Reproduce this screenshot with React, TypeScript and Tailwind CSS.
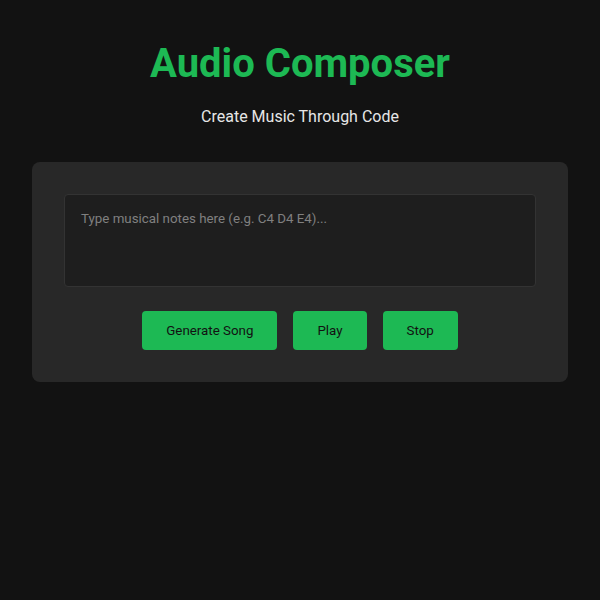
import { useState } from "react";

// Small music sketchpad: type notes, generate, play, stop.

const BUTTON =
  "h-[39px] rounded-[4px] bg-[#1db954] px-6 text-[13.33px] text-[#121212] hover:bg-[#1ed760] transition-colors";

export default function App() {
  const [notes, setNotes] = useState("");

  return (
    <div
      className="min-h-[600px] bg-[#121212] px-8 pt-[41px] pb-8"
      style={{ fontFamily: "Roboto, 'Noto Sans', sans-serif" }}
    >
      {/* ── Header ───────────────────────────────────────────── */}
      <h1 className="text-center text-[40px] font-bold leading-[46px] text-[#1db954]">Audio Composer</h1>
      <p className="mt-[20px] text-center text-[16px] leading-[19px] text-[#e6e6e6]">Create Music Through Code</p>

      {/* ── Editor card ──────────────────────────────────────── */}
      <div className="mt-[36px] rounded-[8px] bg-[#282828] p-8">
        <textarea
          value={notes}
          onChange={(e) => setNotes(e.target.value)}
          placeholder="Type musical notes here (e.g. C4 D4 E4)..."
          className="block h-[93px] w-full resize-none rounded-[4px] border border-[#333333] bg-[#1e1e1e] p-4 text-[13.33px] leading-[16px] text-[#e6e6e6] placeholder:text-[#808080] outline-none"
        />
        <div className="mt-[24px] flex justify-center gap-4">
          <button type="button" className={BUTTON}>
            Generate Song
          </button>
          <button type="button" className={BUTTON}>
            Play
          </button>
          <button type="button" className={BUTTON}>
            Stop
          </button>
        </div>
      </div>
    </div>
  );
}
